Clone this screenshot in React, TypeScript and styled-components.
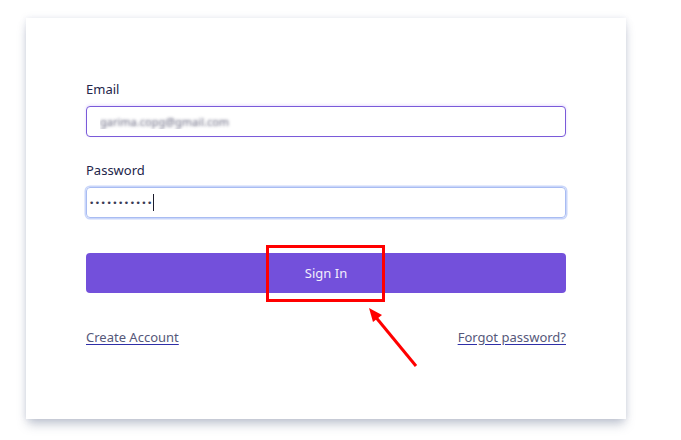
import React from "react";
import styled, { createGlobalStyle } from "styled-components";

const Global = createGlobalStyle`
  html, body { margin: 0; padding: 0; background: #ffffff; }
  body { font-family: "Noto Sans", "Open Sans", sans-serif; }
`;

const Page = styled.div`
  position: relative;
  width: 681px;
  height: 440px;
  padding: 18px 0 0 26px;
  box-sizing: border-box;
`;

const Card = styled.form`
  width: 600px;
  height: 401px;
  box-sizing: border-box;
  background: #ffffff;
  padding: 62px 60px 0 60px;
  display: flex;
  flex-direction: column;
  box-shadow: 0 7px 10px -2px rgba(120, 130, 155, 0.45), 0 0 6px rgba(200, 205, 220, 0.45);
`;

const FieldGroup = styled.div<{ $gapTop?: number }>`
  display: flex;
  flex-direction: column;
  gap: 8px;
  margin-top: ${(p) => p.$gapTop ?? 0}px;
`;

const Label = styled.label`
  font-size: 13px;
  line-height: 18px;
  color: #23254a;
`;

const TextInput = styled.input`
  height: 31px;
  box-sizing: border-box;
  width: 100%;
  border-radius: 4px;
  padding: 0 13px;
  font-family: "Noto Sans", sans-serif;
  font-size: 11px;
  outline: none;
  background: #fff;
  border: 1px solid #7a5bd9;
  color: transparent;
  text-shadow: 0 0 3px rgba(95, 95, 120, 0.95);
  box-shadow: 0 -1px 3px rgba(190, 160, 255, 0.35);
`;

const FakeField = styled.div`
  height: 31px;
  box-sizing: border-box;
  width: 100%;
  border-radius: 4px;
  border: 1px solid #a9bcf2;
  box-shadow: 0 0 0 1.5px #c9d6fa;
  padding: 0 0 0 2px;
  display: flex;
  align-items: center;
`;

const Dots = styled.span`
  font-size: 9px;
  letter-spacing: 0.5px;
  color: #3a3b55;
  font-family: "DejaVu Sans", sans-serif;
`;

const Caret = styled.span`
  display: inline-block;
  width: 1px;
  height: 17px;
  background: #1c1c2c;
  margin-left: 0px;
`;

const Button = styled.button`
  margin-top: 35px;
  height: 40px;
  border: none;
  border-radius: 4px;
  background: #7350db;
  color: #f2eefc;
  font-family: "Noto Sans", sans-serif;
  font-size: 13px;
  cursor: pointer;
`;

const LinkRow = styled.div`
  margin-top: 35px;
  display: flex;
  justify-content: space-between;
  line-height: 18px;
`;

const Link = styled.a`
  font-size: 13px;
  color: #56587a;
  text-decoration: underline;
  text-decoration-color: #2f2fa8;
  text-underline-offset: 2px;
  cursor: pointer;
`;

const Highlight = styled.div`
  position: absolute;
  left: 266px;
  top: 245px;
  width: 119px;
  height: 57px;
  box-sizing: border-box;
  border: 3px solid #ff0000;
  pointer-events: none;
`;

const ArrowSvg = styled.svg`
  position: absolute;
  left: 360px;
  top: 300px;
  pointer-events: none;
`;

export default function App() {
  return (
    <Page>
      <Global />
      <Card onSubmit={(e) => e.preventDefault()}>
        <FieldGroup>
          <Label>Email</Label>
          <TextInput defaultValue="garima.copg@gmail.com" readOnly />
        </FieldGroup>
        <FieldGroup $gapTop={24}>
          <Label>Password</Label>
          <FakeField>
            <Dots>•••••••••••</Dots>
            <Caret />
          </FakeField>
        </FieldGroup>
        <Button type="submit">Sign In</Button>
        <LinkRow>
          <Link>Create Account</Link>
          <Link>Forgot password?</Link>
        </LinkRow>
      </Card>
      <Highlight />
      <ArrowSvg width="70" height="75" viewBox="0 0 70 75">
        <line x1="56" y1="66" x2="14" y2="15" stroke="#ff0000" strokeWidth="3" />
        <polygon points="9,8 22,15 13,22" fill="#ff0000" />
      </ArrowSvg>
    </Page>
  );
}
